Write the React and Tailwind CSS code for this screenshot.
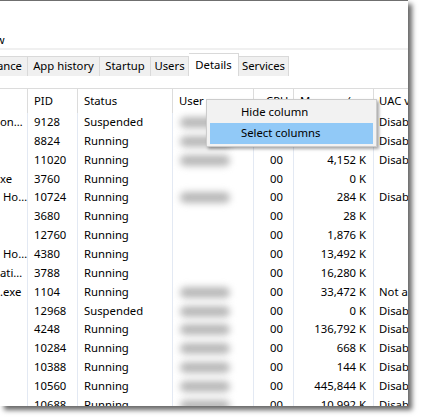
import React from 'react'

const rows = [
  { name: 'on…', pid: '9128', status: 'Suspended', blob: 'w-[52px]', mem: '2,548 K', uac: 'Disabled' },
  { name: '', pid: '8824', status: 'Running', blob: 'w-[52px]', mem: '1,228 K', uac: 'Disabled' },
  { name: '', pid: '11020', status: 'Running', blob: 'w-[50px]', mem: '4,152 K', uac: 'Disabled' },
  { name: 'xe', pid: '3760', status: 'Running', blob: '', mem: '0 K', uac: '' },
  { name: ' Ho…', pid: '10724', status: 'Running', blob: 'w-[50px]', mem: '284 K', uac: 'Disabled' },
  { name: '', pid: '3680', status: 'Running', blob: '', mem: '28 K', uac: '' },
  { name: '', pid: '12760', status: 'Running', blob: '', mem: '1,876 K', uac: '' },
  { name: ' Ho…', pid: '4380', status: 'Running', blob: '', mem: '13,492 K', uac: '' },
  { name: 'ati…', pid: '3788', status: 'Running', blob: '', mem: '16,280 K', uac: '' },
  { name: '.exe', pid: '1104', status: 'Running', blob: 'w-[50px]', mem: '33,472 K', uac: 'Not allowed' },
  { name: '', pid: '12968', status: 'Suspended', blob: 'w-[50px]', mem: '0 K', uac: 'Disabled' },
  { name: '', pid: '4248', status: 'Running', blob: 'w-[50px]', mem: '136,792 K', uac: 'Disabled' },
  { name: '', pid: '10284', status: 'Running', blob: 'w-[50px]', mem: '668 K', uac: 'Disabled' },
  { name: '', pid: '10388', status: 'Running', blob: 'w-[50px]', mem: '144 K', uac: 'Disabled' },
  { name: '', pid: '10560', status: 'Running', blob: 'w-[50px]', mem: '445,844 K', uac: 'Disabled' },
  { name: '', pid: '10688', status: 'Running', blob: 'w-[50px]', mem: '10,992 K', uac: 'Disabled' },
]

const tabs = [
  { label: 'ance', w: 'w-[28px]', pad: 'justify-end pr-[5px]' },
  { label: 'App history', w: 'w-[72px]', pad: 'justify-center' },
  { label: 'Startup', w: 'w-[51px]', pad: 'justify-center' },
  { label: 'Users', w: 'w-[38px]', pad: 'justify-center' },
]

function App() {
  return (
    <div className="h-[420px] w-[424px] bg-white font-['Noto_Sans',sans-serif] text-[11.3px] text-black">
      <div className="relative flex h-[406px] w-[408px] flex-col overflow-hidden border-t border-[#6f6f6f] bg-white shadow-[4px_4px_5px_rgba(0,0,0,0.6)]">
        {/* menu bar, only the tail of "View" is left in the crop */}
        <div className="flex h-[47px] shrink-0 items-end whitespace-nowrap">
          <span className="-ml-[20px] leading-[16px]">View</span>
        </div>
        <div className="h-[2px] shrink-0 bg-[#f0f0f0]" />

        {/* tabs */}
        <div className="flex h-[26px] shrink-0 items-end whitespace-nowrap">
          {tabs.map((t) => (
            <div key={t.label} className={`flex h-[20px] ${t.w} ${t.pad} items-center border-t border-r border-[#d9d9d9] bg-[#f0f0f0]`}>
              {t.label}
            </div>
          ))}
          <div className="flex h-[23px] w-[50px] items-center justify-center border-t border-r border-[#d9d9d9] bg-white">
            Details
          </div>
          <div className="flex h-[20px] w-[50px] items-center justify-center border-t border-r border-[#d9d9d9] bg-[#f0f0f0]">
            Services
          </div>
        </div>

        <div className="h-[12px] shrink-0" />

        {/* column header */}
        <div className="flex h-[25px] shrink-0 items-center border-t border-[#dcdcdc] whitespace-nowrap">
          <div className="h-full w-[28px] shrink-0 border-r border-[#dcdcdc]" />
          <div className="flex h-full w-[50px] shrink-0 items-center border-r border-[#dcdcdc] pl-[6px]">PID</div>
          <div className="flex h-full w-[95px] shrink-0 items-center border-r border-[#dcdcdc] pl-[6px]">Status</div>
          <div className="flex h-full w-[81px] shrink-0 items-center border-r border-[#dcdcdc] pl-[6px]">User name</div>
          <div className="flex h-full w-[40px] shrink-0 items-center border-r border-[#dcdcdc] pl-[12px]">CPU</div>
          <div className="flex h-full w-[80px] shrink-0 items-center overflow-hidden border-r border-[#dcdcdc] pl-[6px]">Memory (a...</div>
          <div className="flex h-full items-center overflow-hidden pl-[5px]">UAC virtualization</div>
        </div>

        {/* rows */}
        <div className="flex shrink-0 flex-col whitespace-nowrap">
          {rows.map((r) => (
            <div key={r.pid} className="flex h-[18.86px] shrink-0 items-center">
              <div className="flex h-full w-[28px] shrink-0 items-center overflow-hidden border-r border-[#e3e9f3] whitespace-pre">{r.name}</div>
              <div className="flex h-full w-[50px] shrink-0 items-center border-r border-[#e3e9f3] pl-[6px]">{r.pid}</div>
              <div className="flex h-full w-[95px] shrink-0 items-center border-r border-[#e3e9f3] pl-[6px]">{r.status}</div>
              <div className="flex h-full w-[81px] shrink-0 items-center border-r border-[#e3e9f3] pl-[7px]">
                {r.blob && <div className={`h-[11px] ${r.blob} rounded-full bg-[#b8b8b8] blur-[3.5px]`} />}
              </div>
              <div className="flex h-full w-[40px] shrink-0 items-center justify-end border-r border-[#e3e9f3] pr-[10px]">00</div>
              <div className="flex h-full w-[80px] shrink-0 items-center justify-end border-r border-[#e3e9f3] pr-[7px]">{r.mem}</div>
              <div className="flex h-full items-center overflow-hidden pl-[5px]">{r.uac}</div>
            </div>
          ))}
        </div>

        {/* context menu over the header */}
        <div className="absolute left-[206px] top-[98px] w-[171px] border border-[#cccccc] bg-[#f2f2f2] pt-[1px] pb-[2px] shadow-[2px_2px_3px_rgba(0,0,0,0.35)]">
          <div className="mx-[3px] flex h-[22px] items-center pl-[31px]">Hide column</div>
          <div className="mx-[3px] flex h-[21px] items-center bg-[#91c9f7] pl-[31px]">Select columns</div>
        </div>
      </div>
    </div>
  )
}

export default App
